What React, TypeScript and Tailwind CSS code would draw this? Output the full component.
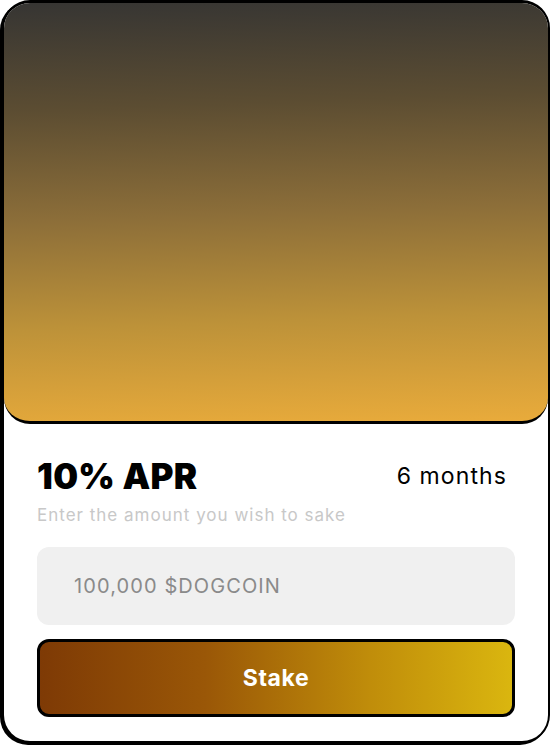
import React from "react";

export default function App() {
  return (
    <div className="w-[552px] h-[745px] bg-white" style={{ fontFamily: "Inter, 'Noto Sans', sans-serif" }}>
      <div className="ml-[2px] w-[548px] h-[743px] border-2 border-t-[3px] border-black rounded-[28px] overflow-hidden shadow-[-2px_2px_0_0_#000] flex flex-col bg-white">
        <div className="h-[421px] shrink-0 border-b-[3px] border-black rounded-b-[26px] bg-[linear-gradient(178deg,#363533_0%,#5c4d32_25%,#8c6e39_50%,#bd9239_75%,#e9ab3b_100%)]" />
        <div className="flex flex-col px-[33px] pt-[30px]">
          <div className="flex items-center justify-between">
            <span className="text-[35px] leading-[44px] font-black tracking-[0.3px] text-black">10% APR</span>
            <span className="text-[23px] leading-[30px] tracking-[1.1px] text-black mr-[8px]">6 months</span>
          </div>
          <div className="mt-[6px] text-[17px] leading-[22px] tracking-[1px] text-[#c8c8c8]">Enter the amount you wish to sake</div>
          <div className="mt-[21px] h-[78px] rounded-[12px] bg-[#f0f0f0] flex items-center pl-[37px] text-[20px] tracking-[1.1px] text-[#8a8a8a]">
            100,000 $DOGCOIN
          </div>
          <div className="mt-[14px] h-[78px] rounded-[12px] border-[3px] border-black bg-[linear-gradient(90deg,#7e3a05_0%,#9a5707_35%,#c08d0a_70%,#dab60f_100%)] flex items-center justify-center text-white font-bold text-[23px] tracking-[0.6px]">
            Stake
          </div>
        </div>
      </div>
    </div>
  );
}
